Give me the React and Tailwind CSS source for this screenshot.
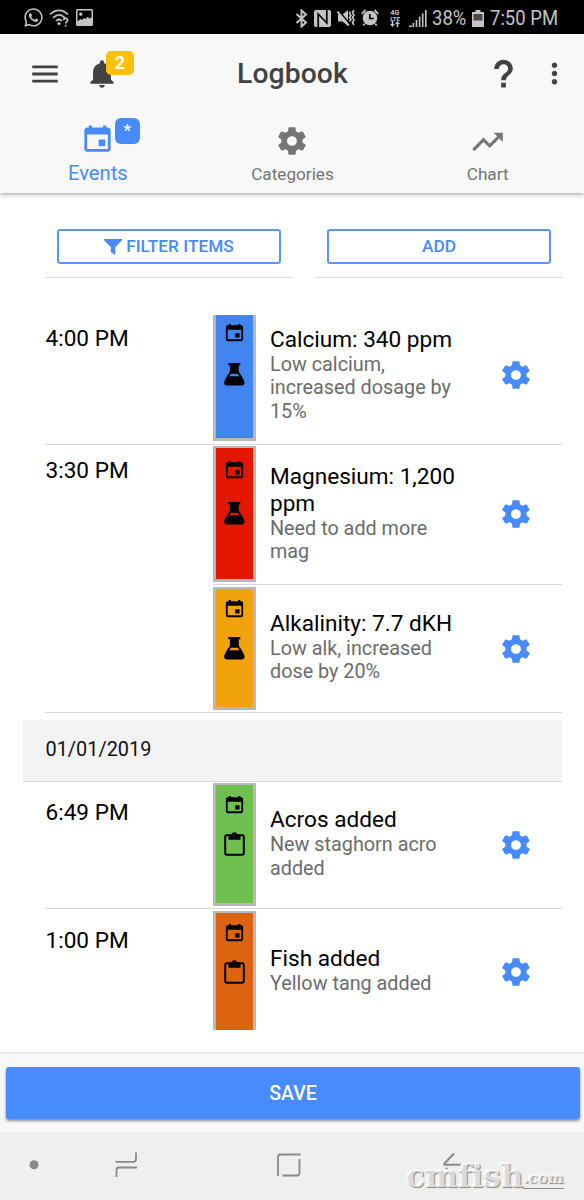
import React from 'react';
import { IoMdCalendar, IoMdSettings, IoMdNotifications, IoMdTrendingUp, IoMdMenu, IoMdMore, IoMdHelp } from 'react-icons/io';
import { FaWhatsapp } from 'react-icons/fa';

const GROUPS = [
  {
    time: '4:00 PM',
    pad: 'pt-[19px]',
    items: [
      { title: 'Calcium: 340 ppm', text: 'Low calcium, increased dosage by 15%', color: 'bg-[#4285f0]', box: 'h-[137px] pt-px pb-[3px]', top: 'pt-[11px]', gap: 'mt-[17px]', body: 'pb-0', icon: 'flask' },
    ],
  },
  {
    time: '3:30 PM',
    pad: 'pt-[13px]',
    items: [
      { title: 'Magnesium: 1,200 ppm', text: 'Need to add more mag', color: 'bg-[#e51600]', box: 'h-[140px] pt-px pb-[2px]', top: 'pt-[10px]', gap: 'mt-[19px]', body: 'pb-[2px]', icon: 'flask' },
      { title: 'Alkalinity: 7.7 dKH', text: 'Low alk, increased dose by 20%', color: 'bg-[#f0a30a]', box: 'h-[127px] pt-[2px] pb-[2px]', top: 'pt-[8px]', gap: 'mt-[15px]', body: 'pb-[4px]', icon: 'flask' },
    ],
  },
  { date: '01/01/2019' },
  {
    time: '6:49 PM',
    pad: 'pt-[18px]',
    items: [
      { title: 'Acros added', text: 'New staghorn acro added', color: 'bg-[#6fc050]', box: 'h-[126px] pt-px pb-[2px]', top: 'pt-[8px]', gap: 'mt-[15px]', body: 'pb-[3px]', icon: 'clipboard' },
    ],
  },
  {
    time: '1:00 PM',
    pad: 'pt-[19px]',
    items: [
      { title: 'Fish added', text: 'Yellow tang added', color: 'bg-[#dc6411]', box: 'h-[126px] pt-[2px] pb-[2px]', top: 'pt-[8px]', gap: 'mt-[15px]', body: 'pb-[3px]', icon: 'clipboard' },
    ],
  },
];

function StatusBar() {
  return (
    <div className="flex h-[34px] shrink-0 items-center bg-black text-[#c4c4c4]">
      <div className="flex items-center pl-[23px] pt-[1px]">
        <FaWhatsapp size={21} />
        <svg width="22" height="20" viewBox="0 0 22 20" className="ml-[5px]" fill="none" stroke="currentColor" strokeWidth="1.7">
          <path d="M1 6.5C6.5 1 13.5 1 19 6.5M4 9.8c4-3.8 8-3.8 12 0M7 13c2-2 4-2 6 0" />
          <circle cx="10" cy="15.6" r="1.5" fill="currentColor" stroke="none" />
          <path d="M14.6 12.2c0-2.4 4-2.4 4 0 0 1.6-2 1.6-2 3.4M16.6 16.8v1.8" />
        </svg>
        <svg width="17" height="17" viewBox="0 0 17 17" className="ml-[5px]">
          <path fillRule="evenodd" fill="currentColor" d="M1.5 0h14A1.5 1.5 0 0 1 17 1.5v14a1.5 1.5 0 0 1-1.5 1.5h-14A1.5 1.5 0 0 1 0 15.5v-14A1.5 1.5 0 0 1 1.5 0zM1.5 1.5v10.8l3.2-2.4 1.5 1.2 1.6-2.1 1.7 1 2.2-2.2 1.8 1.6 2-.9V1.5zM4.8 3.4a1.7 1.7 0 1 0 .01 0z" />
        </svg>
      </div>
      <div className="ml-auto flex items-center pr-[27px] pt-[2px]">
        <svg width="13" height="19" viewBox="0 0 13 19" fill="none" stroke="currentColor" strokeWidth="2">
          <path d="M1.500 5L11 13.500 6.500 17.500v-16L11 5.500 1.500 14" />
        </svg>
        <svg width="17" height="17" viewBox="0 0 17 17" className="ml-[6px]">
          <rect width="17" height="17" rx="2" fill="currentColor" />
          <path d="M4.200 17V4L12.800 13V0" fill="none" stroke="#000" strokeWidth="1.700" />
        </svg>
        <svg width="18" height="18" viewBox="0 0 18 18" className="ml-[6px]" fill="none" stroke="currentColor" strokeWidth="1.600">
          <path d="M1 5.500h4.500L11 1v16l-5.500-4.500H1z" fill="currentColor" stroke="none" />
          <path d="M1.500 1.500L13 15" stroke="#000" strokeWidth="1.500" />
          <path d="M.5 2.500L12 16.500" />
          <path d="M13.500 2.500L12.500 4.500l1.500 2-1.500 2 1.500 2-1.500 2M17 1l-1.500 2.500L17 6l-1.500 2.500L17 11l-1.500 2.500L17 16" />
        </svg>
        <svg width="18" height="18" viewBox="0 0 18 18" className="ml-[6px]" fill="none" stroke="currentColor">
          <circle cx="9" cy="9" r="7.300" fill="currentColor" stroke="none" />
          <path d="M.8 4.800L4.500 1M17.200 4.800L13.500 1M3.600 14.800l-1.200 1.700M14.400 14.800l1.200 1.700" strokeWidth="1.800" />
          <path d="M8.800 5v4.500h4" stroke="#000" strokeWidth="1.600" />
        </svg>
        <div className="ml-[10px] flex w-[12px] flex-col items-center text-[7px] font-bold leading-[6px]">
          <span>4G</span>
          <span className="text-[6px] leading-[5px]">LTE</span>
          <svg width="10" height="6" viewBox="0 0 10 6" fill="currentColor"><path d="M0 3h1.700V0h1.600v3H5L2.500 6zM5 3L7.500 0 10 3H8.300v3H6.700V3z" /></svg>
        </div>
        <svg width="18" height="17" viewBox="0 0 18 17" className="ml-[8px]" fill="currentColor">
          <path d="M0 17h3v-1.500H0zM3.600 17h1.600v-4H3.600zM6.700 17h1.600v-7H6.700zM9.800 17h1.600V6.500H9.800zM12.900 17h1.600V3.500h-1.600zM16 17h1.600V0H16z" />
        </svg>
        <span className="ml-[5px] w-[34px] origin-left scale-x-[.88] text-[21px] leading-none">38%</span>
        <svg width="12" height="17" viewBox="0 0 12 17" className="ml-[6px]">
          <path d="M3.500 0h5v2H12v15H0V2h3.500z" fill="currentColor" />
          <path d="M1.500 4h9v6.500h-9z" fill="#4a4a4a" />
        </svg>
        <span className="ml-[6px] w-[67px] origin-left scale-x-[.88] whitespace-nowrap text-[21px] leading-none">7:50 PM</span>
      </div>
    </div>
  );
}

function Header() {
  return (
    <div className="relative z-10 h-[159px] shrink-0 bg-[#f8f8f8] shadow-[0_1px_5px_rgba(0,0,0,0.4)]">
      <div className="flex h-[79px] items-center text-[#424242]">
        <IoMdMenu size={34} className="ml-[28px]" />
        <div className="relative ml-[23px]">
          <IoMdNotifications size={34} />
          <span className="absolute left-[21px] top-[-6px] flex h-[24px] w-[28px] items-center justify-center rounded-[5px] bg-[#ffc107] text-[18px] font-bold text-white">2</span>
        </div>
        <h1 className="ml-[118px] pt-[2px] text-[28.300px] font-medium tracking-[.1px]">Logbook</h1>
        <IoMdHelp size={37} className="ml-auto" />
        <IoMdMore size={35} className="ml-[15px] mr-[12px]" />
      </div>
      <div className="grid h-[80px] grid-cols-3 text-center text-[#757575]">
        <div className="flex flex-col items-center pt-[8px] text-[#488aff]">
          <div className="relative">
            <IoMdCalendar size={35} />
            <span className="absolute left-[35px] top-[-3px] flex h-[26px] w-[25px] items-center justify-center rounded-[6px] bg-[#488aff] text-[17px] font-medium text-white">*</span>
          </div>
          <span className="mt-[5px] pl-px text-[20.200px] leading-[24px]">Events</span>
        </div>
        <div className="flex flex-col items-center pl-px pt-[11px]">
          <IoMdSettings size={34} />
          <span className="mt-[4px] text-[17.200px] leading-[24px]">Categories</span>
        </div>
        <div className="flex flex-col items-center pl-[2px] pt-[11px]">
          <IoMdTrendingUp size={35} />
          <span className="mt-[3px] text-[17.200px] leading-[24px]">Chart</span>
        </div>
      </div>
    </div>
  );
}

function FlaskIcon({ className }) {
  return (
    <svg width="21" height="26" viewBox="0 0 21 26" className={className} fill="currentColor">
      <path fillRule="evenodd" d="M4.300 2h12v2.300h-1.500V10c.3 2 1.800 3.300 3 5.200l2.200 4.300c1.300 2.700.3 5-2.300 5H3c-2.600 0-3.600-2.300-2.300-5l2.200-4.300c1.200-1.900 2.700-3.200 3-5.200V4.300H4.300zM7 12.800q-.8 1.400-1.800 2.500h10.200q-1-1.100-1.800-2.500z" />
    </svg>
  );
}

function ClipboardIcon({ className }) {
  return (
    <svg width="21" height="26" viewBox="0 0 21 26" className={className}>
      <rect x="1.200" y="4.200" width="18.600" height="19.600" rx="1.700" fill="none" stroke="currentColor" strokeWidth="2" />
      <path fillRule="evenodd" fill="currentColor" d="M4.500 3.500h3c.4-1.500 1.500-2.300 3-2.300s2.600.8 3 2.300h3v5.300h-12zM10.500 3a1.200 1.200 0 1 0 .01 0z" />
    </svg>
  );
}

function EventItem({ item, last }) {
  const Kind = item.icon === 'flask' ? FlaskIcon : ClipboardIcon;
  return (
    <div className={`flex ${item.box} ${last ? '' : 'border-b border-[#d8d8d8]'}`}>
      <div className={`flex w-[43px] shrink-0 flex-col items-center border-[3px] border-t-2 border-[#b8b8b8] text-black ${item.color} ${item.top}`}>
        <IoMdCalendar size={23} className="shrink-0" />
        <Kind className={`shrink-0 ${item.gap}`} />
      </div>
      <div className="flex flex-1 items-center pl-[14px]">
        <div className={`w-[190px] ${item.body}`}>
          <h2 className="text-[22.600px] leading-[27px] text-black">{item.title}</h2>
          <p className="text-[19.800px] leading-[23.300px] text-[#6c6c6c]">{item.text}</p>
        </div>
        <IoMdSettings size={34} className="ml-[38.500px] shrink-0 text-[#488aff]" />
      </div>
    </div>
  );
}

function EventList() {
  return (
    <div className="mt-[37px] h-[715px] overflow-hidden">
      <div className="mt-[-8px] pl-[23px] pr-[22px]">
        {GROUPS.map(g => g.date ? (
          <div key={g.date} className="mt-[7px] flex h-[62px] items-center border-b border-[#d8d8d8] bg-[#f3f3f3] pb-[2px] pl-[22.500px] text-[19.900px] text-[#111]">{g.date}</div>
        ) : (
          <div key={g.time} className="ml-[22px] flex border-b border-[#d8d8d8] last:border-b-0">
            <div className={`w-[168px] pl-[0.500px] text-[22.600px] leading-[26px] text-black ${g.pad}`}>{g.time}</div>
            <div className="flex-1">
              {g.items.map((item, i) => <EventItem key={item.title} item={item} last={i === g.items.length - 1} />)}
            </div>
          </div>
        ))}
      </div>
    </div>
  );
}

function BottomNav() {
  return (
    <div className="relative flex h-[68px] shrink-0 items-start bg-[#efefef] pt-[18px] text-[#8a8a8a]">
      <svg width="10" height="28" viewBox="0 0 10 28" className="ml-[29px]"><circle cx="5" cy="14.800" r="4.500" fill="currentColor" /></svg>
      <svg width="26" height="30" viewBox="0 0 26 30" className="ml-[74px]" fill="none" stroke="currentColor" strokeWidth="1.800">
        <path d="M2.500 11.800h18q2.500 0 2.500-2.500V2.500M3.500 27V20q0-2.500 2.500-2.500h18" />
      </svg>
      <svg width="28" height="30" viewBox="0 0 28 30" className="ml-[136px]" fill="none" stroke="currentColor" strokeWidth="1.800">
        <path d="M3 26V7q0-2.500 2.500-2.500h20M7.500 25.500H22q2.500 0 2.500-2.500V9" />
      </svg>
      <svg width="26" height="30" viewBox="0 0 26 30" className="ml-[138px]" fill="none" stroke="currentColor" strokeWidth="2">
        <path d="M13 3.500L3 14M2.500 14.800H23M5 18l8 8" />
      </svg>
      <div className="absolute left-[406px] top-[24px] flex items-end whitespace-nowrap font-['DejaVu_Serif',serif] font-bold text-[#f1f1f1]/80 [text-shadow:1px_1px_1px_#888,-1px_-1px_0_#fff]">
        <span className="text-[31px] leading-[40px] tracking-[.1px]">cmfish</span>
        <span className="mb-[7px] border-b border-[#8a8a8a] text-[15px] leading-[19px]">.com</span>
      </div>
    </div>
  );
}

export default function App() {
  return (
    <div className="flex h-[1200px] w-[584px] flex-col overflow-hidden bg-white font-[Roboto,sans-serif]">
      <StatusBar />
      <Header />
      <div className="flex-1">
        <div className="flex gap-[22px] pl-[45px] pr-[22px] pt-[36px]">
          <div className="flex-1 border-b border-[#d8d8d8] pb-[13px] pl-[12px] pr-[12px]">
            <button className="flex h-[35px] w-full items-center justify-center gap-[4px] rounded-[3px] border-2 border-[#5c95f5] text-[17.300px] font-medium text-[#488aff]">
              <svg width="18" height="16" viewBox="0 0 18 16" fill="currentColor"><path d="M0 0h18v1.300L11.300 8v8L6.800 13.200V8L0 1.300z" /></svg>
              FILTER ITEMS
            </button>
          </div>
          <div className="flex-1 border-b border-[#d8d8d8] pb-[13px] pl-[12px] pr-[11px]">
            <button className="flex h-[35px] w-full items-center justify-center rounded-[3px] border-2 border-[#5c95f5] text-[17.300px] font-medium text-[#488aff]">ADD</button>
          </div>
        </div>
        <EventList />
      </div>
      <div className="h-[80px] shrink-0 border-t-2 border-[#e9e9e9] bg-[#f8f8f8] pl-[6px] pr-[4px] pt-[13px]">
        <button className="h-[52px] w-full rounded-[3px] bg-[#488aff] pt-px text-[19.500px] font-medium text-white shadow-[0_2px_3px_rgba(0,0,0,0.45)]">SAVE</button>
      </div>
      <BottomNav />
    </div>
  );
}
